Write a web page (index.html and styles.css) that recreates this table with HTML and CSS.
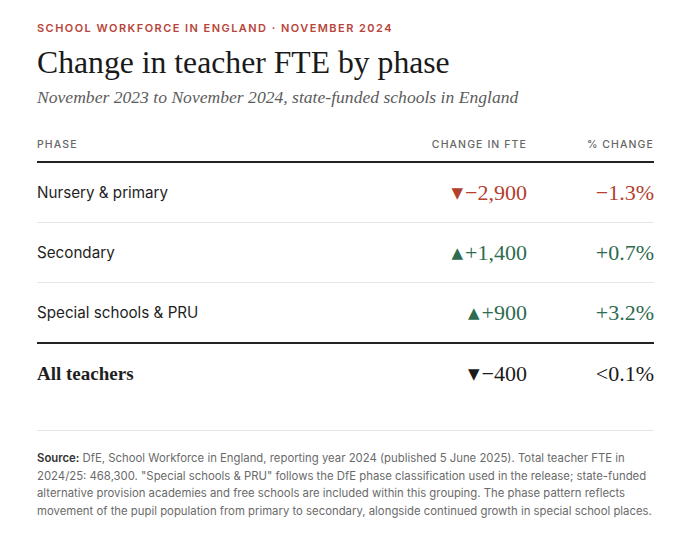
FILE: index.html
```html
<!DOCTYPE html>
<html lang="en">
<head>
<meta charset="utf-8">
<title>Change in teacher FTE by phase</title>
<link rel="stylesheet" href="styles.css">
</head>
<body>
<main class="page">
  <p class="eyebrow">School workforce in England · November 2024</p>
  <h1 class="title">Change in teacher FTE by phase</h1>
  <p class="subtitle">November 2023 to November 2024, state-funded schools in England</p>

  <table class="data">
    <thead>
      <tr>
        <th class="col-phase">Phase</th>
        <th class="col-num">Change in FTE</th>
        <th class="col-pct">% Change</th>
      </tr>
    </thead>
    <tbody>
      <tr>
        <td class="phase">Nursery &amp; primary</td>
        <td class="num neg"><span class="arrow">▼</span>−2,900</td>
        <td class="pct neg">−1.3%</td>
      </tr>
      <tr>
        <td class="phase">Secondary</td>
        <td class="num pos"><span class="arrow">▲</span>+1,400</td>
        <td class="pct pos">+0.7%</td>
      </tr>
      <tr class="last">
        <td class="phase">Special schools &amp; PRU</td>
        <td class="num pos"><span class="arrow">▲</span>+900</td>
        <td class="pct pos">+3.2%</td>
      </tr>
      <tr class="total">
        <td class="phase">All teachers</td>
        <td class="num"><span class="arrow">▼</span>−400</td>
        <td class="pct">&lt;0.1%</td>
      </tr>
    </tbody>
  </table>

  <p class="note"><strong>Source:</strong> DfE, School Workforce in England, reporting year 2024 (published 5 June 2025). Total teacher FTE in 2024/25: 468,300. "Special schools &amp; PRU" follows the DfE phase classification used in the release; state-funded alternative provision academies and free schools are included within this grouping. The phase pattern reflects movement of the pupil population from primary to secondary, alongside continued growth in special school places.</p>
</main>
</body>
</html>
```

FILE: styles.css
```css
html, body {
  margin: 0;
  padding: 0;
  background: #ffffff;
}

.page {
  padding: 21px 26px 0 37px;
  font-family: Inter, "Noto Sans", sans-serif;
  color: #1d1d1d;
}

.eyebrow {
  margin: 0;
  font-family: Inter, sans-serif;
  font-size: 11px;
  font-weight: 600;
  letter-spacing: 1.45px;
  text-transform: uppercase;
  color: #b8443a;
  line-height: 14px;
}

.title {
  margin: 9px 0 0;
  font-family: "Liberation Serif", serif;
  font-weight: 400;
  font-size: 31.7px;
  line-height: 38px;
  color: #1a1a1a;
}

.subtitle {
  margin: 4px 0 0;
  font-family: "Liberation Serif", serif;
  font-style: italic;
  font-size: 17.6px;
  line-height: 22px;
  color: #5c5c5c;
}

.data {
  width: 100%;
  margin-top: 30px;
  border-collapse: collapse;
}

.data th {
  font-family: Inter, sans-serif;
  font-size: 10.5px;
  font-weight: 500;
  letter-spacing: 1.1px;
  text-transform: uppercase;
  color: #666666;
  padding: 0 0 9px;
  line-height: 14px;
  border-bottom: 2px solid #222222;
}

.col-phase { text-align: left; }
.col-num { text-align: right; }
.col-pct { text-align: right; width: 127px; }

.data td {
  height: 59px;
  padding: 0;
  border-bottom: 1px solid #e6e6e6;
  vertical-align: middle;
}

.data tr.last td {
  border-bottom: 2px solid #222222;
}

.data tr.total td {
  border-bottom: none;
}

.phase {
  font-family: Inter, sans-serif;
  font-size: 15.2px;
  color: #1f1f1f;
}

.num, .pct {
  text-align: right;
  font-family: "Liberation Serif", serif;
  font-size: 22px;
  color: #1f1f1f;
}

.arrow {
  font-family: "DejaVu Sans", sans-serif;
  font-size: 15px;
  margin-right: 2px;
  position: relative;
  top: -2px;
}

.neg { color: #b3402d; }
.pos { color: #2e6b50; }

.total .phase {
  font-family: "Liberation Serif", serif;
  font-weight: 700;
  font-size: 19px;
}

.total .num, .total .pct {
  color: #1a1a1a;
}

.note {
  margin: 27px 0 0;
  padding-top: 19px;
  border-top: 1px solid #e6e6e6;
  font-family: Inter, sans-serif;
  font-size: 11.35px;
  line-height: 17.6px;
  color: #6a6a6a;
}

.note strong {
  font-weight: 600;
  color: #333333;
}
```
